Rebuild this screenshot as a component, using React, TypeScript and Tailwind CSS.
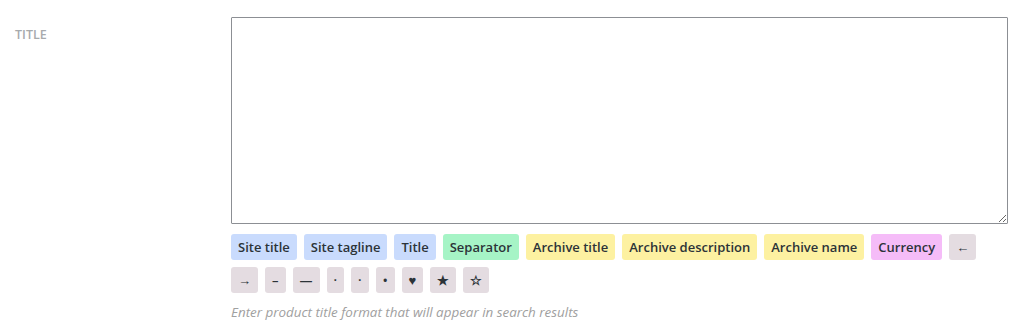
const blue = "bg-[#c9dbfd]";
const green = "bg-[#a6f4c6]";
const yellow = "bg-[#fdf1a1]";
const pink = "bg-[#f5bcf8]";
const gray = "bg-[#e4dce1]";

const tags: { label: string; color: string }[] = [
  { label: "Site title", color: blue },
  { label: "Site tagline", color: blue },
  { label: "Title", color: blue },
  { label: "Separator", color: green },
  { label: "Archive title", color: yellow },
  { label: "Archive description", color: yellow },
  { label: "Archive name", color: yellow },
  { label: "Currency", color: pink },
  { label: "←", color: gray },
  { label: "→", color: gray },
  { label: "–", color: gray },
  { label: "—", color: gray },
  { label: "·", color: gray },
  { label: "·", color: gray },
  { label: "•", color: gray },
  { label: "♥", color: gray },
  { label: "★", color: gray },
  { label: "☆", color: gray },
];

export default function App() {
  return (
    <div className="w-[1024px] h-[332px] bg-white font-['Open_Sans',sans-serif] text-[#2c3338]">
      <div className="flex pt-[17px]">
        <div className="w-[231px] shrink-0 pl-[15px] pt-[9px] leading-[14px]">
          <span className="text-[12.5px] font-semibold uppercase text-[#a7aaad]">Title</span>
        </div>
        <div className="w-[777px]">
          <textarea className="block h-[207px] w-full resize-y rounded-[1px] border border-[#8c8f94] bg-white p-2 outline-none" />
          <div className="mt-[10px] flex flex-wrap gap-x-[7px] gap-y-[7px]">
            {tags.map((t, i) => (
              <button
                key={i}
                className={`${t.color} h-[26px] rounded-[3px] px-[7px] text-[13px] font-semibold leading-[26px] text-[#2c3338]`}
              >
                {t.label}
              </button>
            ))}
          </div>
          <p className="mt-[9px] text-[13.4px] italic text-[#a0a0a0]">
            Enter product title format that will appear in search results
          </p>
        </div>
      </div>
    </div>
  );
}
